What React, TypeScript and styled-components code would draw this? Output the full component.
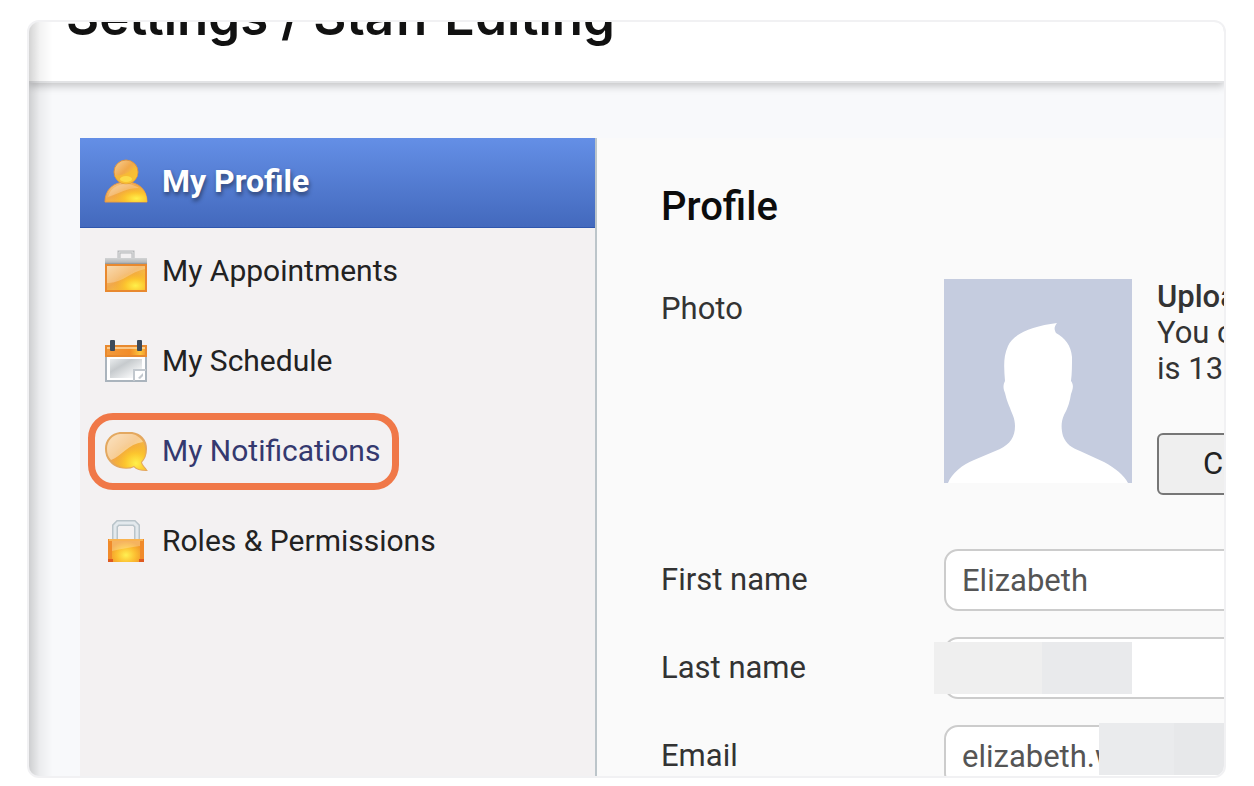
import React from "react";
import styled, { createGlobalStyle, css } from "styled-components";

const GlobalStyle = createGlobalStyle`
  *, *::before, *::after { box-sizing: border-box; }
  body {
    margin: 0;
    background: #ffffff;
    color: #1c1c1c;
    font-family: Roboto, "Liberation Sans", sans-serif;
    font-size: 30px;
    line-height: 36px;
  }
`;

const Frame = styled.main`
  position: relative;
  display: flex;
  flex-direction: column;
  height: calc(100vh - 28px);
  margin: 20px 28px 8px 27px;
  border: 2px solid #f1f1f3;
  border-radius: 12px;
  overflow: hidden;
  background: #f8f9fb;
`;

const EdgeShade = styled.div`
  position: absolute;
  inset: 0 auto 0 0;
  width: 24px;
  background: linear-gradient(to right, rgba(0, 0, 0, 0.17), rgba(0, 0, 0, 0.05) 45%, rgba(0, 0, 0, 0));
  pointer-events: none;
`;

const Header = styled.header`
  flex: none;
  padding: 0 37px 36px;
  background: #ffffff;
  border-bottom: 2px solid #e2e3e5;
  box-shadow: 0 3px 8px rgba(0, 0, 0, 0.22);
`;

const PageTitle = styled.h1`
  margin: -33px 0 0;
  font-family: Inter, "Open Sans", sans-serif;
  font-size: 51px;
  font-weight: 600;
  line-height: 56px;
  color: #111111;
  white-space: nowrap;
`;

const Body = styled.div`
  display: flex;
  flex: 1;
  min-height: 0;
  padding: 55px 0 0 51px;
`;

const Sidebar = styled.nav`
  flex: none;
  width: 517px;
  background: #f3f1f2;
  border-right: 2px solid #bcc5ca;
`;

const NavItem = styled.a<{ $active?: boolean; $marked?: boolean }>`
  position: relative;
  display: flex;
  align-items: center;
  gap: 14px;
  height: 90px;
  padding: 0 24px 4px;
  color: ${(p) => (p.$marked ? "#34396f" : "#222222")};
  text-decoration: none;
  white-space: nowrap;
  ${(p) =>
    p.$active &&
    css`
      background: linear-gradient(#648fe6, #4369bd);
      border-bottom: 1px solid #2e56ae;
      color: #ffffff;
      font-size: 32px;
      font-weight: 700;
      text-shadow: 1px 3px 4px rgba(0, 0, 0, 0.45);
    `}
`;

const Marker = styled.span`
  position: absolute;
  top: 5px;
  left: 8px;
  width: 311px;
  height: 77px;
  border: 7px solid #f07848;
  border-radius: 25px;
  pointer-events: none;
`;

const Icon = styled.svg`
  flex: none;
  width: 44px;
  height: 44px;
`;

const Panel = styled.section`
  flex: 1;
  min-width: 0;
  padding: 47px 0 0 64px;
  background: #fafafa;
  font-size: 31px;
`;

const PanelTitle = styled.h2`
  margin: 0 0 50px;
  font-size: 40px;
  font-weight: 500;
  line-height: 44px;
  color: #0c0c0c;
`;

const Row = styled.div`
  position: relative;
  display: grid;
  grid-template-columns: 283px 1fr;
  align-items: center;
  margin: 0 -24px 26px 0;
`;

const PhotoRow = styled(Row)`
  align-items: start;
  margin-bottom: 54px;
`;

const labelText = css`
  color: #333333;
  white-space: nowrap;
`;

const Label = styled.label`
  ${labelText}
`;

const PhotoLabel = styled.span`
  ${labelText}
  padding-top: 12px;
`;

const PhotoBlock = styled.div`
  display: flex;
  gap: 25px;
`;

const Avatar = styled.svg`
  flex: none;
  width: 188px;
  height: 204px;
`;

const Upload = styled.div`
  color: #333333;
  white-space: nowrap;
`;

const UploadText = styled.p`
  margin: 0 0 46px;
`;

const UploadTitle = styled.strong`
  font-weight: 500;
`;

const Button = styled.button`
  height: 62px;
  padding: 0 44px;
  border: 2px solid #767676;
  border-radius: 6px;
  background: #efefef;
  color: #222222;
  font: inherit;
`;

const Input = styled.input`
  width: 100%;
  height: 62px;
  padding: 0 16px;
  border: 2px solid #cccccc;
  border-radius: 14px;
  background: #ffffff;
  color: #555555;
  font: inherit;
`;

const Mask = styled.span<{ $left: number; $top: number; $width: number; $from: string; $to: string; $split: number }>`
  position: absolute;
  left: ${(p) => p.$left}px;
  top: ${(p) => p.$top}px;
  width: ${(p) => p.$width}px;
  height: 52px;
  background: linear-gradient(to right, ${(p) => p.$from} ${(p) => p.$split}px, ${(p) => p.$to} ${(p) => p.$split}px);
`;

const Gradients = () => (
  <defs>
    <linearGradient id="gold" x1="0" y1="0" x2="1" y2="1">
      <stop offset="0" stopColor="#f7d09a" />
      <stop offset="0.45" stopColor="#f1a84a" />
      <stop offset="0.8" stopColor="#fbcb35" />
      <stop offset="1" stopColor="#f0a52c" />
    </linearGradient>
    <radialGradient id="glow" cx="0.75" cy="0.82" r="0.6">
      <stop offset="0" stopColor="#fff04a" />
      <stop offset="0.45" stopColor="#fcc62f" />
      <stop offset="1" stopColor="#f3a12b" stopOpacity="0" />
    </radialGradient>
    <linearGradient id="steel" x1="0" y1="0" x2="0" y2="1">
      <stop offset="0" stopColor="#d2d4d5" />
      <stop offset="0.6" stopColor="#b9bbbc" />
      <stop offset="1" stopColor="#777a7c" />
    </linearGradient>
    <linearGradient id="paper" x1="0" y1="0" x2="1" y2="1">
      <stop offset="0" stopColor="#e9ecee" />
      <stop offset="0.35" stopColor="#c6cacd" />
      <stop offset="0.8" stopColor="#f4f5f6" />
      <stop offset="1" stopColor="#ffffff" />
    </linearGradient>
    <linearGradient id="tab" x1="0" y1="0" x2="1" y2="0">
      <stop offset="0" stopColor="#f29a3c" />
      <stop offset="0.6" stopColor="#f28c28" />
      <stop offset="0.85" stopColor="#fcc53c" />
      <stop offset="1" stopColor="#f29a2c" />
    </linearGradient>
    <radialGradient id="lock" cx="0.5" cy="0.7" r="0.6">
      <stop offset="0" stopColor="#fff052" />
      <stop offset="0.55" stopColor="#fcc032" />
      <stop offset="1" stopColor="#f29a2a" />
    </radialGradient>
  </defs>
);

const ProfileIcon = () => (
  <Icon viewBox="0 0 44 44" aria-hidden="true">
    <Gradients />
    <path d="M1 43C1 31 9 23 22 23s21 8 21 20z" fill="url(#gold)" stroke="#e89a45" />
    <path d="M1 43C1 31 9 23 22 23s21 8 21 20z" fill="url(#glow)" />
    <circle cx="22" cy="13" r="12" fill="url(#gold)" stroke="#dd9440" />
    <path d="M11 16c5 1 14-1 19-8 3 2 4 6 3 9-2 5-6 8-11 8s-10-4-11-9z" fill="#f8bd30" opacity=".7" />
    <ellipse cx="22" cy="20" rx="6" ry="3" fill="#ffe650" opacity=".75" />
    <path d="M4 38c2-8 9-13 18-13 5 0 10 2 13 4-12 0-19 5-31 9z" fill="#fff" opacity=".22" />
  </Icon>
);

const BriefcaseIcon = () => (
  <Icon viewBox="0 0 44 44" aria-hidden="true">
    <path d="M15 10V3h14v7" fill="none" stroke="#b5b7b9" strokeWidth="3" />
    <path d="M15 10V3h14v7" fill="none" stroke="#e2e3e4" />
    <rect x="1" y="9" width="42" height="7" fill="url(#steel)" />
    <rect x="2" y="16" width="40" height="26" fill="url(#gold)" stroke="#e8892f" strokeWidth="2" />
    <rect x="3" y="17" width="38" height="24" fill="url(#glow)" />
    <path d="M3 17h38v3C26 23 20 33 5 34H3z" fill="#fff" opacity=".25" />
  </Icon>
);

const CalendarIcon = () => (
  <Icon viewBox="0 0 44 44" aria-hidden="true">
    <rect x="2" y="16" width="40" height="26" fill="#fff" stroke="#aab4bd" strokeWidth="2" />
    <rect x="6" y="20" width="32" height="19" fill="url(#paper)" />
    <rect x="2" y="7" width="40" height="10" fill="url(#tab)" stroke="#e88a30" strokeWidth="2" />
    <rect x="3" y="8" width="38" height="2" fill="#fde0b0" opacity=".7" />
    <rect x="6" y="1" width="5" height="11" rx="1" fill="#3d4a5a" />
    <rect x="33" y="1" width="5" height="11" rx="1" fill="#3d4a5a" />
    <path d="M30 42V31h12" fill="#fff" stroke="#c2c8ce" strokeWidth="2" />
    <path d="M34 39l5-5v3l-3 3z" fill="#c2c8ce" />
  </Icon>
);

const BubbleIcon = () => (
  <Icon viewBox="0 0 44 44" aria-hidden="true">
    <path
      d="M16 4h12c8 1 14 7 14 16 0 6-2 10-5 13 0 3 3 5 5 8-5 0-9-1-12-4-4 2-10 2-14 1C8 36 2 29 2 20 2 11 8 5 16 4z"
      fill="url(#gold)"
      stroke="#e3a860"
      strokeWidth="2"
    />
    <path
      d="M16 4h12c8 1 14 7 14 16 0 6-2 10-5 13 0 3 3 5 5 8-5 0-9-1-12-4-4 2-10 2-14 1C8 36 2 29 2 20 2 11 8 5 16 4z"
      fill="url(#glow)"
    />
    <path d="M16 5h12c5 1 9 4 11 8-15 2-21 14-32 18-3-3-4-7-4-11 0-8 5-14 13-15z" fill="#fff" opacity=".42" />
  </Icon>
);

const LockIcon = () => (
  <Icon viewBox="0 0 44 44" aria-hidden="true">
    <path d="M11 20V7l3-3h16l3 3v13" fill="none" stroke="#b9c4ca" strokeWidth="6" />
    <path d="M11 20V7l3-3h16l3 3v13" fill="none" stroke="#e3e9ed" strokeWidth="3" />
    <rect x="4" y="20" width="36" height="23" fill="#f08a2a" />
    <rect x="8" y="20" width="28" height="23" fill="url(#lock)" />
    <path d="M5 21h34" stroke="#f9b350" strokeWidth="2" />
    <path d="M8 22h28v5c-9 1-19 3-28 5z" fill="#fff" opacity=".25" />
    <path d="M4 40h5v3H4zM35 40h5v3h-5z" fill="#df5a20" />
  </Icon>
);

const navItems = [
  { label: "My Profile", icon: <ProfileIcon />, active: true },
  { label: "My Appointments", icon: <BriefcaseIcon /> },
  { label: "My Schedule", icon: <CalendarIcon /> },
  { label: "My Notifications", icon: <BubbleIcon />, marked: true },
  { label: "Roles & Permissions", icon: <LockIcon /> },
];

export default function App() {
  return (
    <>
      <GlobalStyle />
      <Frame>
        <Header>
          <PageTitle>Settings / Staff Editing</PageTitle>
        </Header>
        <Body>
          <Sidebar aria-label="Settings">
            {navItems.map((item) => (
              <NavItem
                key={item.label}
                href="#"
                $active={item.active}
                $marked={item.marked}
                aria-current={item.active ? "page" : undefined}
              >
                {item.icon}
                {item.label}
                {item.marked && <Marker />}
              </NavItem>
            ))}
          </Sidebar>
          <Panel>
            <PanelTitle>Profile</PanelTitle>
            <PhotoRow>
              <PhotoLabel>Photo</PhotoLabel>
              <PhotoBlock>
                <Avatar viewBox="0 0 188 204" role="img" aria-label="Profile photo">
                  <rect width="188" height="204" fill="#c5ccdf" />
                  <path
                    d="M4 204C8 194 18 186 30 181L56 170C66 165 71 158 71 147C71 139 68 135 66 129C63 122 62 118 61 114C59 109 59 106 61 102C60 89 59 78 64 67C69 55 88 47 113 44C110 48 110 50 112 54C121 59 127 66 128 78C128 86 128 94 127 102C130 106 129 110 127 115C126 122 124 129 120 136C117 143 117 149 119 157C122 165 128 169 136 172L160 183C171 189 180 196 184 204Z"
                    fill="#ffffff"
                  />
                </Avatar>
                <Upload>
                  <UploadText>
                    <UploadTitle>Upload</UploadTitle>
                    <br />
                    You can
                    <br />
                    is 130
                  </UploadText>
                  <Button type="button">Choose</Button>
                </Upload>
              </PhotoBlock>
            </PhotoRow>
            <Row>
              <Label htmlFor="first-name">First name</Label>
              <Input id="first-name" defaultValue="Elizabeth" />
            </Row>
            <Row>
              <Label htmlFor="last-name">Last name</Label>
              <Input id="last-name" />
              <Mask $left={273} $top={5} $width={198} $from="#efefef" $to="#e9eaec" $split={108} />
            </Row>
            <Row>
              <Label htmlFor="email">Email</Label>
              <Input id="email" type="email" defaultValue="elizabeth.w" />
              <Mask $left={438} $top={-2} $width={140} $from="#eaebed" $to="#e7e8ea" $split={75} />
            </Row>
          </Panel>
        </Body>
        <EdgeShade />
      </Frame>
    </>
  );
}
